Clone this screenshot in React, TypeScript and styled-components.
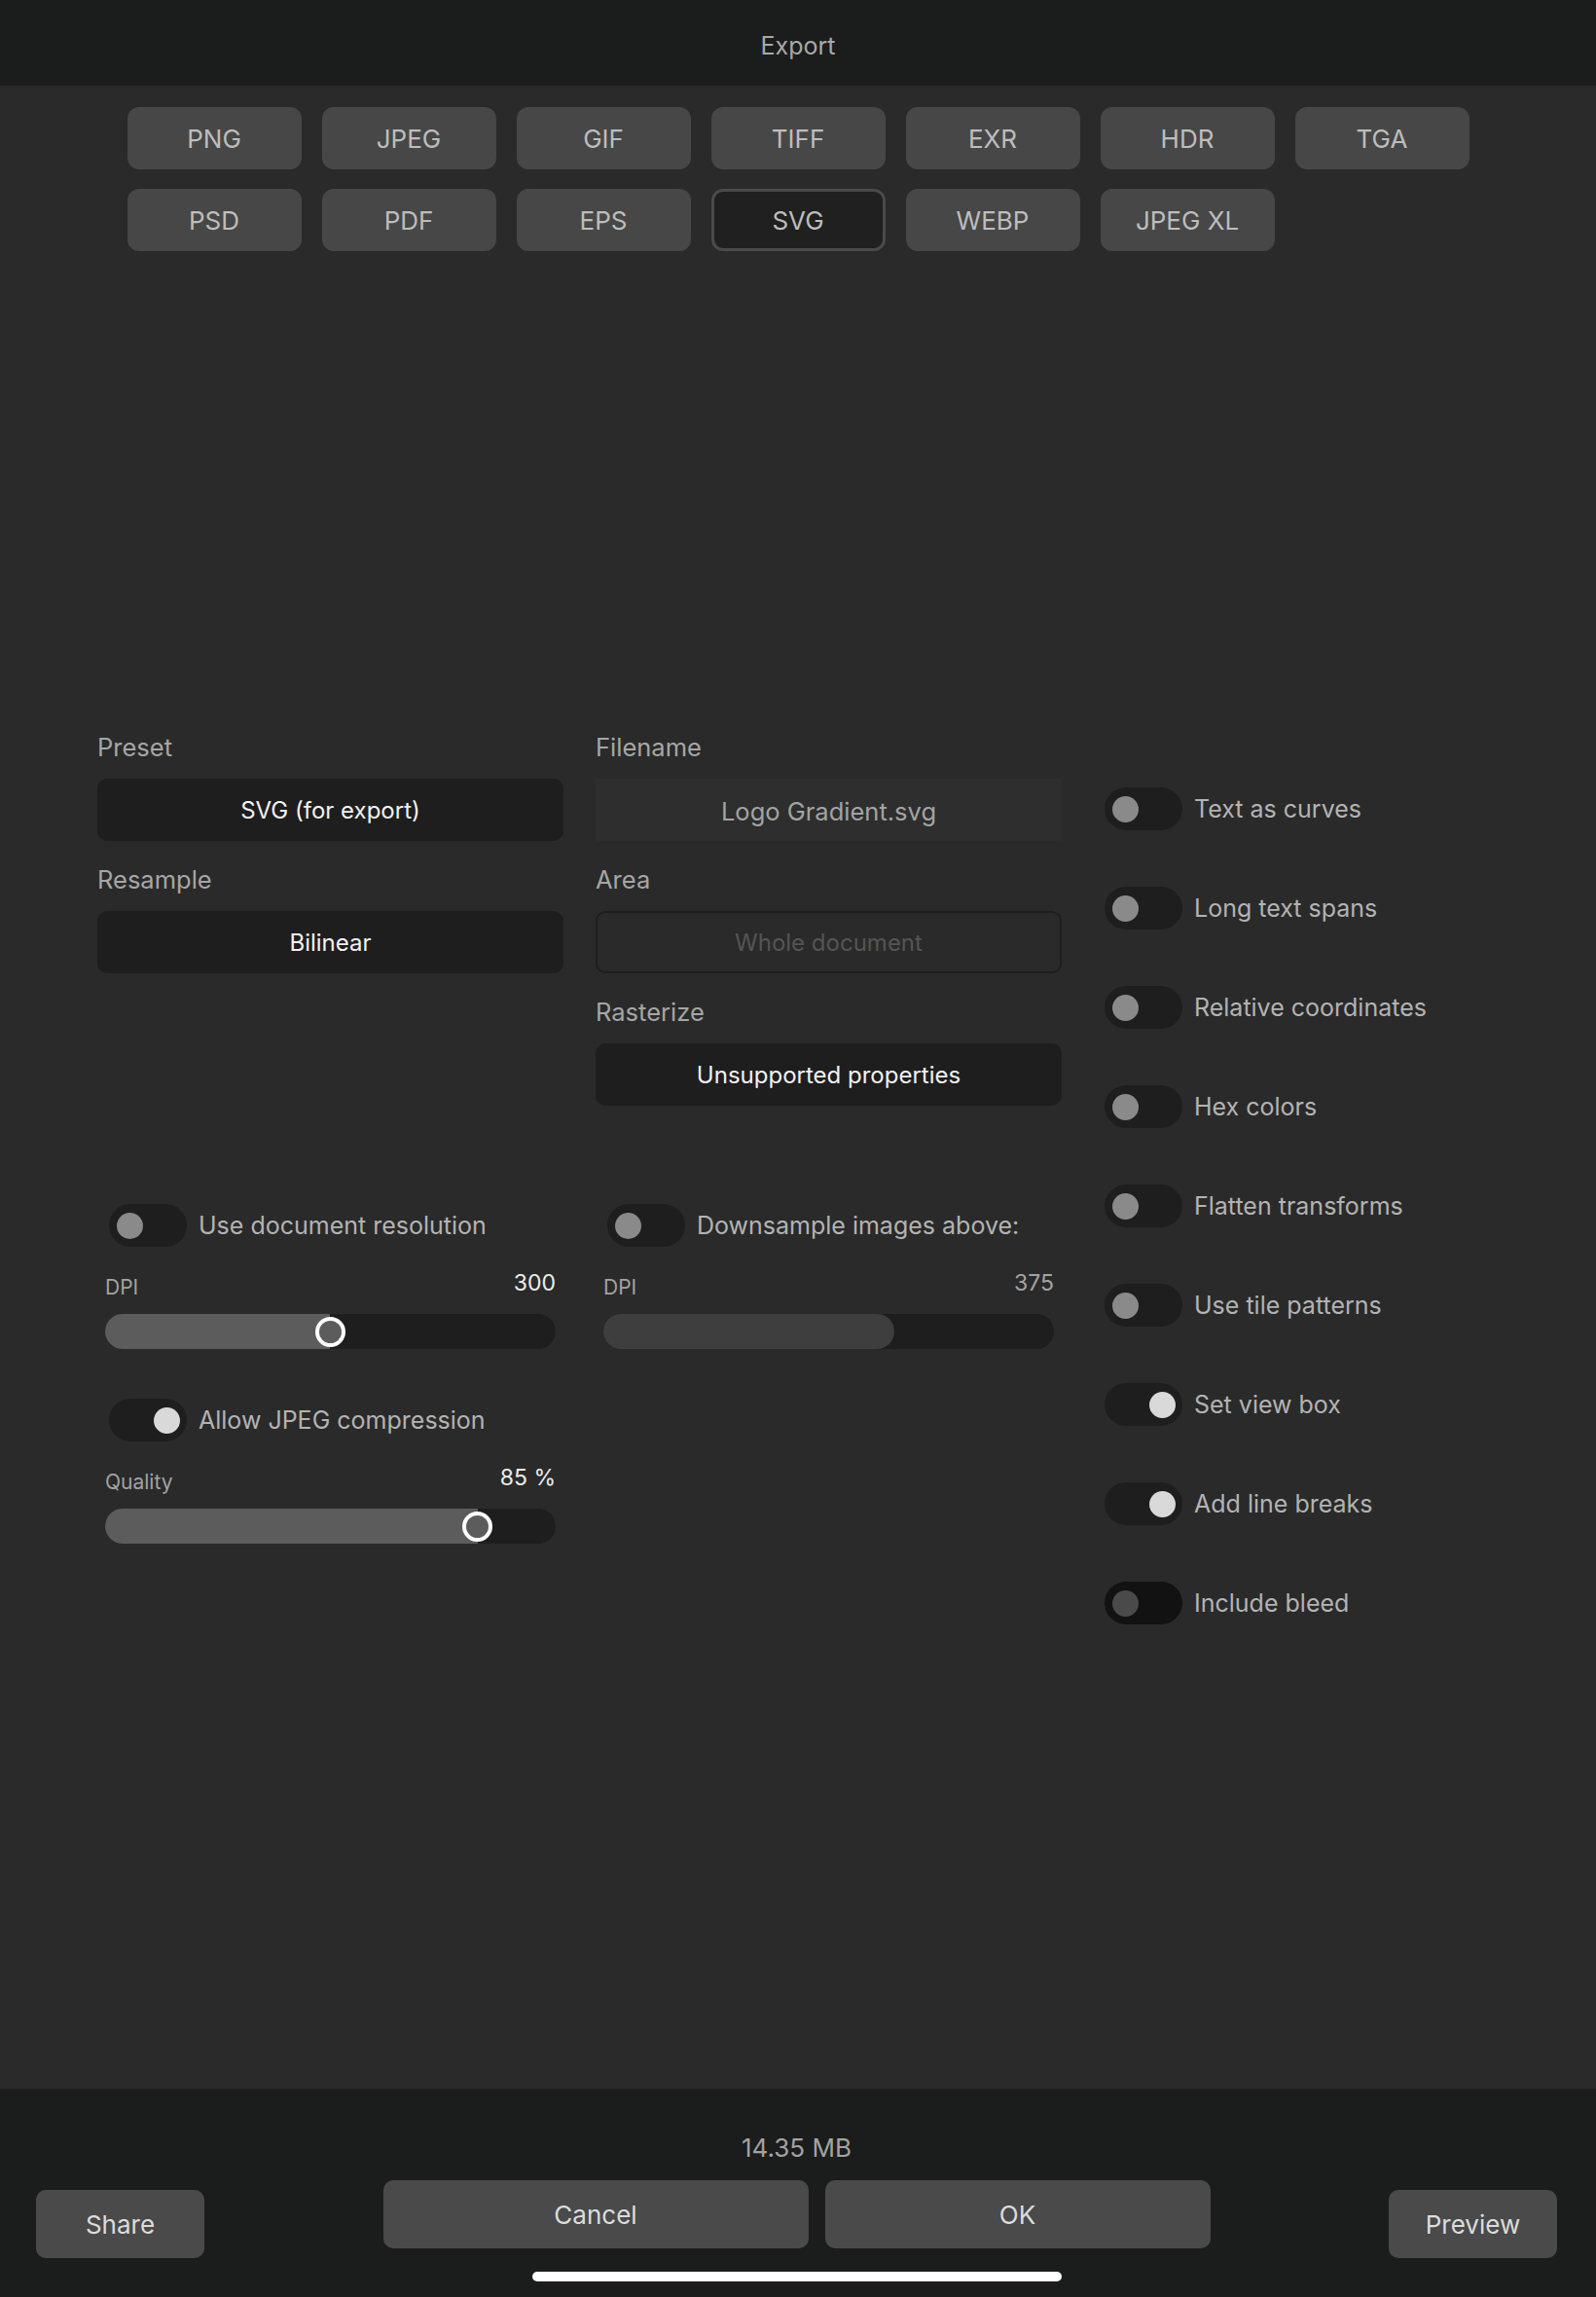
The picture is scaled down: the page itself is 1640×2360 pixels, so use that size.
import React from "react";
import styled, { createGlobalStyle } from "styled-components";

const GlobalStyle = createGlobalStyle`
  html, body {
    margin: 0;
    padding: 0;
    background: #2a2a2a;
  }

  body {
    font-family: Inter, "Noto Sans", sans-serif;
    -webkit-font-smoothing: antialiased;
  }

  * {
    box-sizing: border-box;
  }
`;

const Page = styled.div`
  width: 1640px;
  height: 2360px;
  display: flex;
  flex-direction: column;
  background: #2a2a2a;
`;

const TitleBar = styled.header`
  height: 88px;
  flex-shrink: 0;
  padding-top: 6px;
  background: #1b1c1c;
  display: flex;
  align-items: center;
  justify-content: center;
  color: #a9a9a9;
  font-size: 25px;
`;

const Main = styled.main`
  flex: 1;
`;

const FormatGrid = styled.div`
  padding-top: 22px;
  display: grid;
  grid-template-columns: repeat(7, 179px);
  gap: 20px 21px;
  justify-content: center;
`;

const FormatButton = styled.div<{ $active?: boolean }>`
  height: 64px;
  border-radius: 12px;
  display: flex;
  align-items: center;
  justify-content: center;
  background: ${(p) => (p.$active ? "#202020" : "#474747")};
  border: 3px solid ${(p) => (p.$active ? "#4a4a4a" : "transparent")};
  color: #bdbdbd;
  font-size: 26px;
`;

const Form = styled.section`
  margin-top: 494px;
  padding-left: 100px;
  display: flex;
  align-items: flex-start;
`;

const LeftArea = styled.div`
  display: grid;
  grid-template-columns: 479px 479px;
  column-gap: 33px;
  row-gap: 101px;
  align-items: start;
`;

const FieldStack = styled.div`
  display: flex;
  flex-direction: column;
  gap: 24px;
`;

const Field = styled.div`
  display: flex;
  flex-direction: column;
  gap: 16px;
`;

const FieldLabel = styled.div`
  font-size: 25.5px;
  line-height: 32px;
  color: #a6a6a6;
`;

const ValueBox = styled.div<{ $variant?: "filled" | "plain" | "outline" }>`
  height: 64px;
  display: flex;
  align-items: center;
  justify-content: center;
  padding-top: ${(p) => (p.$variant === "plain" ? "3px" : "0")};
  font-size: ${(p) => (p.$variant === "plain" ? "25.5px" : "24px")};
  border-radius: ${(p) => (p.$variant === "plain" ? "0" : "10px")};
  background: ${(p) =>
    p.$variant === "plain"
      ? "#2e2e2e"
      : p.$variant === "outline"
      ? "transparent"
      : "#1e1e1e"};
  border: 2px solid
    ${(p) => (p.$variant === "outline" ? "#1e1e1e" : "transparent")};
  color: ${(p) =>
    p.$variant === "plain"
      ? "#a3a3a3"
      : p.$variant === "outline"
      ? "#555555"
      : "#f2f2f2"};
`;

const OptionGroup = styled.div`
  padding: 0 8px;
  display: flex;
  flex-direction: column;
`;

const ToggleRow = styled.label<{ $inset?: boolean }>`
  display: flex;
  align-items: center;
  gap: 12px;
  padding-left: ${(p) => (p.$inset ? "4px" : "0")};
  font-size: 25px;
  color: #b3b3b3;
`;

const Switch = styled.span<{ $on?: boolean; $disabled?: boolean }>`
  position: relative;
  flex-shrink: 0;
  width: 80px;
  height: 44px;
  border-radius: 22px;
  background: ${(p) => (p.$disabled ? "#121212" : "#1e1e1e")};

  &::after {
    content: "";
    position: absolute;
    top: 8.5px;
    left: ${(p) => (p.$on ? "45.5px" : "7.5px")};
    width: 27px;
    height: 27px;
    border-radius: 50%;
    background: ${(p) =>
      p.$disabled ? "#4a4a4a" : p.$on ? "#d9d9d9" : "#8a8a8a"};
  }
`;

const SliderBlock = styled.div<{ $gapAfter?: number }>`
  margin-top: 24px;
  margin-bottom: ${(p) => p.$gapAfter ?? 0}px;
`;

const SliderHead = styled.div`
  display: flex;
  justify-content: space-between;
  align-items: flex-start;
  line-height: 26px;
  margin-bottom: 14px;
`;

const SliderLabel = styled.span`
  padding-top: 5px;
  font-size: 21px;
  color: #a3a3a3;
`;

const SliderValue = styled.span<{ $dim?: boolean }>`
  font-size: 23px;
  color: ${(p) => (p.$dim ? "#a3a3a3" : "#ededed")};
`;

const Track = styled.div`
  position: relative;
  height: 36px;
  border-radius: 18px;
  background: #1e1e1e;
`;

const Fill = styled.div<{ $dim?: boolean; $thumb?: boolean }>`
  height: 100%;
  border-radius: ${(p) => (p.$thumb ? "18px 0 0 18px" : "18px")};
  background: ${(p) => (p.$dim ? "#3e3e3e" : "#5c5c5c")};
`;

const Thumb = styled.div`
  position: absolute;
  top: 50%;
  width: 31px;
  height: 31px;
  margin: -15.5px 0 0 -15.5px;
  border: 4px solid #ffffff;
  border-radius: 50%;
  background: #5c5c5c;
`;

const RightColumn = styled.div`
  margin-left: 44px;
  padding-top: 57px;
  display: flex;
  flex-direction: column;
  gap: 58px;
`;

const Footer = styled.footer`
  height: 214px;
  flex-shrink: 0;
  background: #1b1c1c;
  display: grid;
  grid-template-columns: 173px 1fr 173px;
  padding: 0 40px 0 37px;
`;

const SideButton = styled.div`
  margin-top: 104px;
  height: 70px;
  border-radius: 10px;
  background: #4a4a4a;
  color: #dcdcdc;
  font-size: 26px;
  display: flex;
  align-items: center;
  justify-content: center;
`;

const FooterCenter = styled.div`
  padding-top: 45px;
  display: flex;
  flex-direction: column;
  align-items: center;
`;

const FileSize = styled.div`
  font-size: 26px;
  line-height: 32px;
  color: #a3a3a3;
`;

const ActionRow = styled.div`
  margin-top: 17px;
  display: flex;
  gap: 17px;
`;

const ActionButton = styled.div<{ $width: number }>`
  width: ${(p) => p.$width}px;
  height: 70px;
  border-radius: 10px;
  background: #4a4a4a;
  color: #dcdcdc;
  font-size: 26px;
  display: flex;
  align-items: center;
  justify-content: center;
`;

const HomeIndicator = styled.div`
  margin-top: 24px;
  width: 544px;
  height: 10px;
  border-radius: 5px;
  background: #ffffff;
`;

const formats = [
  "PNG", "JPEG", "GIF", "TIFF", "EXR", "HDR", "TGA",
  "PSD", "PDF", "EPS", "SVG", "WEBP", "JPEG XL",
];

const svgOptions = [
  { label: "Text as curves", on: false },
  { label: "Long text spans", on: false },
  { label: "Relative coordinates", on: false },
  { label: "Hex colors", on: false },
  { label: "Flatten transforms", on: false },
  { label: "Use tile patterns", on: false },
  { label: "Set view box", on: true },
  { label: "Add line breaks", on: true },
  { label: "Include bleed", on: false, disabled: true },
];

type SliderProps = {
  label: string;
  value: string;
  pct: number;
  dim?: boolean;
  thumb?: boolean;
  gapAfter?: number;
};

const Slider: React.FC<SliderProps> = ({ label, value, pct, dim, thumb, gapAfter }) => (
  <SliderBlock $gapAfter={gapAfter}>
    <SliderHead>
      <SliderLabel>{label}</SliderLabel>
      <SliderValue $dim={dim}>{value}</SliderValue>
    </SliderHead>
    <Track>
      <Fill $dim={dim} $thumb={thumb} style={{ width: `${pct}%` }} />
      {thumb && <Thumb style={{ left: `${pct}%` }} />}
    </Track>
  </SliderBlock>
);

const App: React.FC = () => {
  return (
    <Page>
      <GlobalStyle />
      <TitleBar>Export</TitleBar>
      <Main>
        <FormatGrid>
          {formats.map((f) => (
            <FormatButton key={f} $active={f === "SVG"}>
              {f}
            </FormatButton>
          ))}
        </FormatGrid>

        <Form>
          <LeftArea>
            <FieldStack>
              <Field>
                <FieldLabel>Preset</FieldLabel>
                <ValueBox>SVG (for export)</ValueBox>
              </Field>
              <Field>
                <FieldLabel>Resample</FieldLabel>
                <ValueBox>Bilinear</ValueBox>
              </Field>
            </FieldStack>
            <FieldStack>
              <Field>
                <FieldLabel>Filename</FieldLabel>
                <ValueBox $variant="plain">Logo Gradient.svg</ValueBox>
              </Field>
              <Field>
                <FieldLabel>Area</FieldLabel>
                <ValueBox $variant="outline">Whole document</ValueBox>
              </Field>
              <Field>
                <FieldLabel>Rasterize</FieldLabel>
                <ValueBox>Unsupported properties</ValueBox>
              </Field>
            </FieldStack>

            <OptionGroup>
              <ToggleRow $inset>
                <Switch />
                Use document resolution
              </ToggleRow>
              <Slider label="DPI" value="300" pct={49.9} thumb gapAfter={51} />
              <ToggleRow $inset>
                <Switch $on />
                Allow JPEG compression
              </ToggleRow>
              <Slider label="Quality" value="85 %" pct={82.7} thumb />
            </OptionGroup>
            <OptionGroup>
              <ToggleRow $inset>
                <Switch />
                Downsample images above:
              </ToggleRow>
              <Slider label="DPI" value="375" pct={64.6} dim />
            </OptionGroup>
          </LeftArea>

          <RightColumn>
            {svgOptions.map((o) => (
              <ToggleRow key={o.label}>
                <Switch $on={o.on} $disabled={o.disabled} />
                {o.label}
              </ToggleRow>
            ))}
          </RightColumn>
        </Form>
      </Main>

      <Footer>
        <SideButton>Share</SideButton>
        <FooterCenter>
          <FileSize>14.35 MB</FileSize>
          <ActionRow>
            <ActionButton $width={437}>Cancel</ActionButton>
            <ActionButton $width={396}>OK</ActionButton>
          </ActionRow>
          <HomeIndicator />
        </FooterCenter>
        <SideButton>Preview</SideButton>
      </Footer>
    </Page>
  );
};

export default App;
